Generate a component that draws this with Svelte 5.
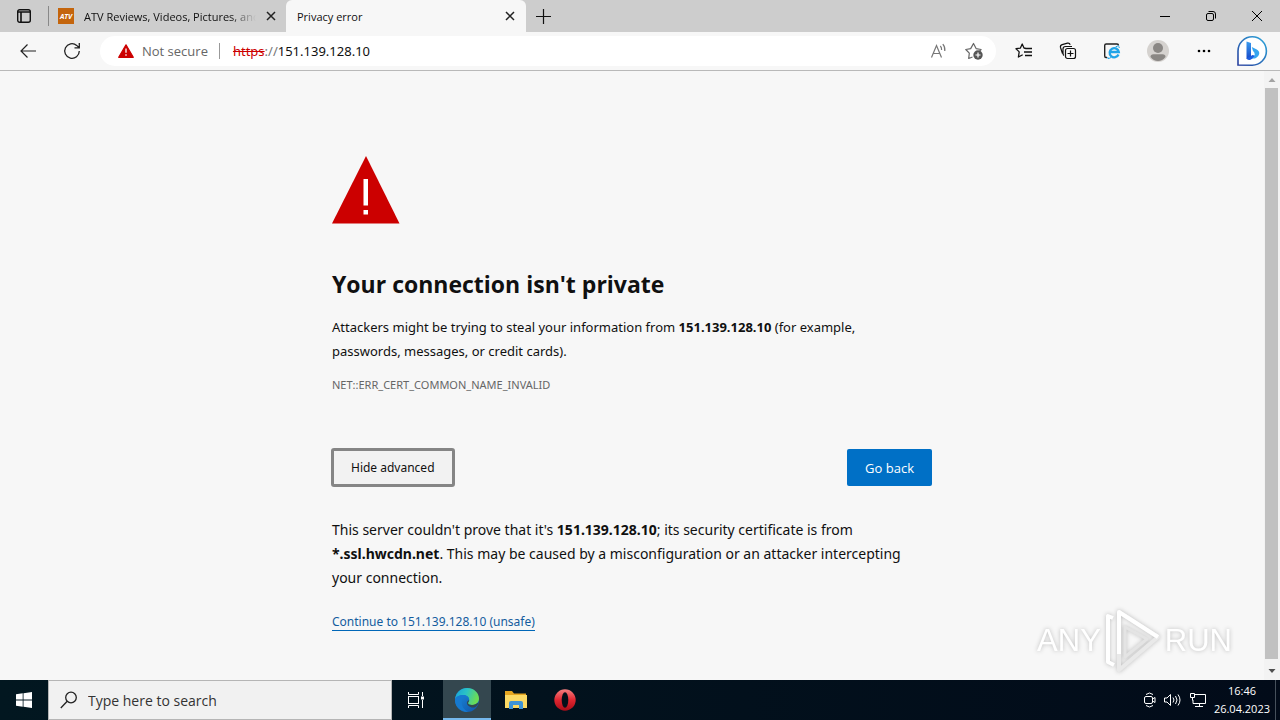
<script>
    let search = "";
    let advanced = true;
    const host = "151.139.128.10";
</script>

<div class="desktop">
    <header class="tabs">
        <button class="tab-menu" aria-label="Tab actions">
            <svg width="16" height="16" viewBox="0 0 16 16" fill="none" stroke="#111">
                <rect x="1.7" y="1.7" width="12.6" height="12.6" rx="2" stroke-width="1.4"/>
                <path d="M1.7 4h12.6M5 4v10" stroke-width="1.6"/>
            </svg>
        </button>
        <span class="divider"></span>
        <div class="tab">
            <svg width="16" height="16" viewBox="0 0 16 16">
                <rect width="16" height="16" fill="#c4650c"/>
                <text x="8" y="11" fill="#fff" font-size="7" font-weight="700" font-style="italic" text-anchor="middle">ATV</text>
            </svg>
            <span class="title faded">ATV Reviews, Videos, Pictures, and</span>
            <button class="close" aria-label="Close tab">
                <svg width="10" height="10" viewBox="0 0 10 10" stroke="#222" stroke-width="1.5"><path d="M1 1l8 8M9 1l-8 8"/></svg>
            </button>
        </div>
        <div class="tab active">
            <span class="title">Privacy error</span>
            <button class="close" aria-label="Close tab">
                <svg width="10" height="10" viewBox="0 0 10 10" stroke="#222" stroke-width="1.5"><path d="M1 1l8 8M9 1l-8 8"/></svg>
            </button>
        </div>
        <button class="new-tab" aria-label="New tab">
            <svg width="15" height="15" viewBox="0 0 15 15" stroke="#111" stroke-width="1.2"><path d="M7.5 0v15M0 7.5h15"/></svg>
        </button>
        <div class="window-buttons">
            <button aria-label="Minimize">
                <svg width="10" height="10" viewBox="0 0 10 10" stroke="#000"><path d="M0 5.5h10"/></svg>
            </button>
            <button aria-label="Restore">
                <svg width="10" height="10" viewBox="0 0 10 10" fill="none" stroke="#000">
                    <rect x=".5" y="2.5" width="7" height="7" rx="1.5"/>
                    <path d="M2.5 .5H7A2.5 2.5 0 0 1 9.500 3v4.500"/>
                </svg>
            </button>
            <button aria-label="Close">
                <svg width="10" height="10" viewBox="0 0 10 10" stroke="#000"><path d="M0 0l10 10M10 0L0 10"/></svg>
            </button>
        </div>
    </header>

    <nav class="toolbar">
        <button class="nav" aria-label="Back">
            <svg width="16" height="14" viewBox="0 0 16 14" fill="none" stroke="#222" stroke-width="1.2"><path d="M16 7H1M7.500 .5L1 7l6.500 6.500"/></svg>
        </button>
        <button class="nav" aria-label="Refresh">
            <svg width="18" height="18" viewBox="0 0 18 18" fill="none" stroke="#222" stroke-width="1.3"><path d="M16.300 9A7.300 7.300 0 1 1 13.700 3.400L16 5.600M16.300 1v4.800h-4.800"/></svg>
        </button>
        <div class="address">
            <svg width="16" height="14" viewBox="0 0 16 14">
                <path d="M8 .8L15.300 13.300H.7z" fill="#c00" stroke="#c00" stroke-width="1.200" stroke-linejoin="round"/>
                <path d="M8 4.500v4.300M8 10.200v1.500" stroke="#fff" stroke-width="1.300"/>
            </svg>
            <span class="security">Not secure</span>
            <span class="bar"></span>
            <span class="url" role="textbox" aria-label="Address" tabindex="0" contenteditable="true"><s>https</s><i>://</i>{host}</span>
            <button aria-label="Read aloud">
                <svg width="18" height="16" viewBox="0 0 18 16" fill="none" stroke="#777" stroke-width="1.200">
                    <path d="M2.500 14.500L7.500 2.500l5 12M4.300 10.500h6.400M11.300 3q1.500 1.500 1.300 4M13.800 1.200q2.500 2.800 2 6.800"/>
                </svg>
            </button>
            <button aria-label="Add to favorites">
                <svg width="18" height="18" viewBox="0 0 18 18">
                    <path d="M7.500 15L3.700 16.500 4.300 11.200.8 7.500l4.900-.9L8.500 1.500l2.600 5.100 5 .9-1.500 1.500" fill="none" stroke="#666" stroke-width="1.200" stroke-linejoin="round"/>
                    <circle cx="13" cy="13" r="4.700" fill="#555"/>
                    <path d="M13 10.500v5M10.500 13h5" stroke="#fff" stroke-width="1.200"/>
                </svg>
            </button>
        </div>
        <div class="actions">
            <button aria-label="Favorites">
                <svg width="18" height="16" viewBox="0 0 18 16" fill="none" stroke="#111" stroke-width="1.300" stroke-linejoin="round">
                    <path d="M11 5.500L9 5 7.200 1 5.300 5.200 1 5.700l3.200 3.200L3.400 14l4.300-2.300M10 5.500h7M9 9h8M10 12.500h7"/>
                </svg>
            </button>
            <button aria-label="Collections">
                <svg width="18" height="18" viewBox="0 0 18 18" fill="none" stroke="#111" stroke-width="1.200">
                    <path d="M3.500 11.500L1.500 5.500Q1 3.300 3.200 2.700L8.500 1.200q2-.4 2.700 1.600M5 13.500Q4 13 4 11V7q0-2.500 2.500-2.500H13"/>
                    <rect x="6.500" y="6.500" width="10" height="10" rx="2"/>
                    <path d="M11.500 8.500v6M8.500 11.500h6"/>
                </svg>
            </button>
            <button aria-label="Internet Explorer mode">
                <svg width="18" height="18" viewBox="0 0 18 18" fill="none">
                    <path d="M4 15.500H3Q1.700 15.500 1.700 14V3.500Q1.700 2 3.200 2H14q1.500 0 1.500 1.500" stroke="#222" stroke-width="1.400"/>
                    <path d="M15.500 12.500A4.600 4.600 0 1 1 15.800 10H7" stroke="#20a4e8" stroke-width="2.300"/>
                    <path d="M5 15Q3.500 18 8 15.500M12.500 5q4-2.500 3.700 1" stroke="#20a4e8"/>
                </svg>
            </button>
            <button class="profile" aria-label="Profile">
                <svg width="22" height="22" viewBox="0 0 22 22">
                    <circle cx="11" cy="11" r="11" fill="#d5d2cf"/>
                    <circle cx="11" cy="8" r="5" fill="#8a8784"/>
                    <path d="M3.500 17q0-2.800 3-2.800h9q3 0 3 2.800-3 4-7.500 4t-7.500-4z" fill="#8a8784"/>
                </svg>
            </button>
            <button aria-label="Settings and more">
                <svg width="14" height="4" viewBox="0 0 14 4"><circle cx="2" cy="2" r="1.300"/><circle cx="7" cy="2" r="1.300"/><circle cx="12" cy="2" r="1.300"/></svg>
            </button>
            <button class="bing" aria-label="Bing">
                <svg width="32" height="32" viewBox="0 0 32 32">
                    <defs>
                        <linearGradient id="ring" x1="0" y1="1" x2="1" y2="0"><stop offset="0" stop-color="#283e9d"/><stop offset="1" stop-color="#2da8dc"/></linearGradient>
                        <linearGradient id="bee" x1="0" y1="0" x2="0" y2="1"><stop offset="0" stop-color="#3a9cef"/><stop offset="1" stop-color="#1648c8"/></linearGradient>
                    </defs>
                    <path d="M2 30V16a14.200 14.200 0 1 1 14.200 14.200z" fill="#fff" stroke="url(#ring)" stroke-width="1.600"/>
                    <path d="M10.500 6.500l4.500 1.500v14l-4.500 2z" fill="url(#bee)"/>
                    <path d="M10.500 23.500l6-3.500 4 1-6 3.700q-2.200 1-4-1.200z" fill="#1b5de0"/>
                    <path d="M15.800 12l5 2.400q2.900 1.600 2.400 4.700-.5 2.600-3.200 3.800-2.500 1.200-4 .300 3-1.500 2.700-4.200-.2-1.800-1.700-3z" fill="#36a5ef"/>
                </svg>
            </button>
        </div>
    </nav>

    <div class="viewport">
        <main>
            <svg class="warning" width="68" height="68" viewBox="0 0 68 68">
                <path d="M34 0l33.500 67.500H0z" fill="#c00"/>
                <path d="M31.500 23h4.500v26.500h-4.500zM31.500 54h4.500v4.500h-4.500z" fill="#fff"/>
            </svg>
            <h1>Your connection isn't private</h1>
            <p class="lead">Attackers might be trying to steal your information from <b>{host}</b> (for example, passwords, messages, or credit cards).</p>
            <p class="code">NET::ERR_CERT_COMMON_NAME_INVALID</p>
            <div class="buttons">
                <button class="details" on:click={() => advanced = !advanced}>{advanced ? "Hide advanced" : "Advanced"}</button>
                <button class="primary">Go back</button>
            </div>
            {#if advanced}
                <p class="more">This server couldn't prove that it's <b>{host}</b>; its security certificate is from <b>*.ssl.hwcdn.net</b>. This may be caused by a misconfiguration or an attacker intercepting your connection.</p>
                <a href="#unsafe">Continue to {host} (unsafe)</a>
            {/if}
        </main>
        <div class="scrollbar">
            <svg width="16" height="17" viewBox="0 0 16 17"><path d="M4.500 11L8 7l3.500 4z" fill="#a3a3a3"/></svg>
            <div class="thumb"></div>
            <svg width="16" height="21" viewBox="0 0 16 21"><path d="M4.500 10L8 14l3.500-4z" fill="#505050"/></svg>
        </div>
        <div class="watermark">
            <span>ANY</span>
            <svg width="58" height="64" viewBox="0 0 58 64" fill="none" stroke-width="4" stroke-linejoin="round">
                <path d="M9 9L4 7v46l6 3" stroke="#fff"/>
                <path d="M15 3l39 25-39 33z" stroke="#e9e9e9"/>
                <path d="M15 45V3l39 25" stroke="#fff"/>
                <path d="M21 18v30l22-18z" stroke="#e4e4e4" stroke-width="3"/>
            </svg>
            <span>RUN</span>
        </div>
    </div>

    <footer>
        <button class="start" aria-label="Start">
            <svg width="16" height="16" viewBox="0 0 16 16" fill="#fff"><path d="M0 2.300L6.700 1.300v6.200H0zM7.500 1.200L16 0v7.500H7.500zM0 8.400h6.700v6.300L0 13.700zM7.500 8.400H16V16l-8.500-1.200z"/></svg>
        </button>
        <label class="search">
            <svg width="18" height="18" viewBox="0 0 18 18" fill="none" stroke="#222" stroke-width="1.300"><circle cx="11" cy="6.500" r="5.300"/><path d="M7.200 10.300L.8 17"/></svg>
            <input type="text" bind:value={search} placeholder="Type here to search" aria-label="Type here to search"/>
        </label>
        <button class="app task-view" aria-label="Task View">
            <svg width="18" height="16" viewBox="0 0 18 16" fill="none" stroke="#fff">
                <path d="M1.500 0v2.500h10V0M1.500 16v-2.500h10V16"/><rect x="1.500" y="4.500" width="10" height="7"/>
                <path d="M15.500 0v4M15.500 8v8"/><path d="M14 4.500h3v3h-3z" fill="#fff" stroke="none"/>
            </svg>
        </button>
        <button class="app current" aria-label="Microsoft Edge">
            <svg width="24" height="24" viewBox="0 0 24 24">
                <defs>
                    <linearGradient id="top" x1="0" y1="0" x2="1" y2=".3"><stop offset="0" stop-color="#169fda"/><stop offset=".5" stop-color="#2bc3c5"/><stop offset="1" stop-color="#6bdc55"/></linearGradient>
                    <linearGradient id="low" x1="0" y1="0" x2="1" y2="1"><stop offset="0" stop-color="#1b8fdf"/><stop offset="1" stop-color="#1153a8"/></linearGradient>
                </defs>
                <circle cx="12" cy="12" r="12" fill="url(#low)"/>
                <path d="M.1 11C1 4.500 6 0 12 0c7 0 12 5 12 10.500 0 4-3 6.500-7 6.500-2.500 0-4-1-4-2 0-.8 1.200-1.300 1.200-3.200C14.200 8.500 11 7 8 7 4 7 1 9 .1 11z" fill="url(#top)"/>
                <path d="M14.200 12c0 1.700-1.200 2.200-1.200 3 0 1 1.500 2 4 2 2.200 0 4-.7 5.500-2 .8 0 .7.700.2 1.500C20.500 20 17.500 20 15.500 19c-4-1.500-5-5.500-1.300-7z" fill="#34474f"/>
                <path d="M8 10c-3 4-1 11 5 14C4 24-.5 17 .1 11 1.500 8 5 7 8 7c3.500 0 6 2 6.200 4.500C12.500 9 9.500 8.500 8 10z" fill="#1679cf"/>
            </svg>
        </button>
        <button class="app" aria-label="File Explorer">
            <svg width="22" height="20" viewBox="0 0 22 20">
                <path d="M0 1h7l2 2.500h12V18H0z" fill="#e5a520"/>
                <path d="M0 5h22v13H0z" fill="#fbd964"/>
                <path d="M4 19v-6q0-2 2-2h10q2 0 2 2v6h-4v-4H8v4z" fill="#3d93d6"/>
            </svg>
        </button>
        <button class="app" aria-label="Opera">
            <svg width="22" height="22" viewBox="0 0 22 22">
                <defs><linearGradient id="red" x1="0" y1="0" x2="0" y2="1"><stop offset="0" stop-color="#f58080"/><stop offset=".5" stop-color="#e02630"/><stop offset="1" stop-color="#a80d18"/></linearGradient></defs>
                <circle cx="11" cy="11" r="10.700" fill="url(#red)"/><ellipse cx="11" cy="11" rx="3.300" ry="7.800" fill="#041019"/>
            </svg>
        </button>
        <div class="tray">
            <svg width="14" height="16" viewBox="0 0 14 16" fill="none" stroke="#fff">
                <rect x="1.500" y="4.500" width="8" height="7" rx="1.500"/><path d="M9.500 7l2.500-1.500v5L9.500 9M3 2.500Q6.500-.5 10 2.500M3 13.500q3.500 3 7 0"/>
            </svg>
            <svg width="18" height="14" viewBox="0 0 18 14" fill="none" stroke="#fff"><path d="M.5 5v4H3l3.500 3.500v-11L3 5zM9 4.500q2 2.500 0 5M11.500 3q3 4 0 8M14 1.500q4 5.500 0 11"/></svg>
            <svg width="18" height="16" viewBox="0 0 18 16" fill="none" stroke="#fff"><path d="M6 2.500h10.500v9H4V8M10.500 11.500v3M6 14.500h8M1.500 1.500h4v4h-4zM3.500 5.500v3"/></svg>
            <time><span>16:46</span><span>26.04.2023</span></time>
        </div>
        <span class="peek"></span>
    </footer>
</div>

<style>
    :global(body) {
        margin: 0;
    }

    .desktop {
        display: flex;
        flex-direction: column;
        min-height: 100vh;
        background: #f7f7f7;
        color: #101010;
        font-family: "Open Sans", "Noto Sans", sans-serif;
        font-size: 12px;
    }

    button, input {
        font: inherit;
        color: inherit;
    }

    button {
        display: flex;
        align-items: center;
        justify-content: center;
        padding: 0;
        border: 0;
        background: none;
    }

    svg {
        flex: none;
        display: block;
    }

    .tabs {
        display: flex;
        align-items: center;
        height: 32px;
        background: #cdcdcd;
    }

    .tab-menu {
        width: 48px;
    }

    .divider {
        width: 1px;
        height: 20px;
        margin-right: 9px;
        background: #888;
    }

    .tab {
        display: flex;
        align-items: center;
        gap: 10px;
        width: 228px;
        height: 32px;
        font-size: 11px;
    }

    .tab.active {
        box-sizing: border-box;
        width: 240px;
        padding: 0 11px;
        border-radius: 6px 6px 0 0;
        background: #f7f7f7;
    }

    .title {
        flex: 1;
        overflow: hidden;
        white-space: nowrap;
    }

    .faded {
        mask-image: linear-gradient(to right, #000 85%, transparent);
    }

    .tab:not(.active) .close {
        margin-right: 10px;
    }

    .new-tab {
        width: 34px;
        height: 32px;
    }

    .window-buttons {
        display: flex;
        margin-left: auto;
    }

    .window-buttons button {
        width: 46px;
        height: 32px;
    }

    .toolbar {
        display: flex;
        align-items: center;
        height: 38px;
        padding-left: 6px;
        border-bottom: 1px solid #b9b9b9;
    }

    .nav {
        width: 44px;
        height: 32px;
    }

    .address {
        display: flex;
        flex: 1;
        align-items: center;
        height: 30px;
        margin-left: 6px;
        padding: 0 4px 0 18px;
        border-radius: 15px;
        background: #fff;
        font-size: 13px;
    }

    .security {
        margin-left: 8px;
        color: #666;
    }

    .bar {
        width: 1px;
        height: 16px;
        margin: 0 13px 0 11px;
        background: #999;
    }

    .url {
        flex: 1;
        outline: none;
        font-family: "Noto Sans", sans-serif;
    }

    .url s {
        color: #c00;
    }

    .url i {
        color: #777;
        font-style: normal;
    }

    .address button {
        width: 36px;
    }

    .actions {
        display: flex;
        padding-left: 6px;
    }

    .actions button {
        width: 44px;
        height: 32px;
    }

    .actions .profile {
        width: 48px;
    }

    .actions .bing {
        width: 54px;
        padding-right: 2px;
    }

    .viewport {
        position: relative;
        display: flex;
        flex: 1;
    }

    main {
        box-sizing: border-box;
        width: 100%;
        max-width: 600px;
        margin: 0 auto;
        padding: 85px 0 48px;
        font-family: "Noto Sans", sans-serif;
    }

    h1 {
        margin: 43px 0 14px;
        font-family: "Open Sans", sans-serif;
        font-size: 23px;
        font-weight: 700;
        line-height: 34px;
    }

    p {
        margin: 0;
        line-height: 24px;
    }

    .lead {
        padding-right: 24px;
        font-size: 13px;
    }

    .code {
        margin-top: 10px;
        color: #666;
        font-size: 11px;
    }

    .buttons {
        display: flex;
        justify-content: space-between;
        margin: 52px 0 32px;
    }

    .buttons button {
        box-sizing: border-box;
        height: 37px;
        padding: 0 18px;
        border-radius: 2px;
        font-size: 13px;
    }

    .buttons .details {
        outline: 3px solid #858585;
        outline-offset: -2px;
        background: #f2f2f2;
        font-size: 12px;
        padding: 0 19px;
    }

    .buttons .primary {
        background: #0070c6;
        color: #fff;
        font-family: "Open Sans", sans-serif;
    }

    .more {
        font-size: 14px;
    }

    a {
        display: inline-block;
        margin-top: 24px;
        border-bottom: 1px solid #0067b8;
        color: #145c9e;
        font-size: 12px;
        line-height: 16px;
        text-decoration: none;
    }

    .scrollbar {
        display: flex;
        flex-direction: column;
        width: 16px;
        background: #f3f3f3;
    }

    .thumb {
        flex: 1;
        margin: 0 2px 0 1px;
        background: #c1c1c1;
    }

    .watermark {
        position: absolute;
        right: 48px;
        bottom: 7px;
        display: flex;
        align-items: center;
        gap: 3px;
        color: #fff;
        filter: drop-shadow(0 0 2px #bbb);
        font-family: "Liberation Sans", sans-serif;
        font-size: 31px;
        pointer-events: none;
    }

    footer {
        display: flex;
        height: 40px;
        background: linear-gradient(to right, #021720, #020b19);
        color: #fff;
    }

    .start {
        width: 48px;
    }

    .search {
        box-sizing: border-box;
        display: flex;
        align-items: center;
        gap: 10px;
        width: 344px;
        padding: 0 11px;
        border: 1px solid #b5b5b5;
        background: #f1f1f1;
    }

    .search input {
        flex: 1;
        min-width: 0;
        padding: 0;
        border: 0;
        outline: none;
        background: none;
        color: #222;
        font-size: 14px;
    }

    .search input::placeholder {
        color: #333;
        opacity: 1;
    }

    .app {
        width: 49px;
    }

    .task-view {
        width: 51px;
        padding-right: 3px;
    }

    .current {
        box-sizing: border-box;
        width: 48px;
        padding-top: 2px;
        border-bottom: 2px solid #76b9ed;
        background: #34474f;
    }

    .tray {
        display: flex;
        align-items: center;
        gap: 7px;
        margin-left: auto;
        padding-right: 5px;
    }

    .peek {
        width: 4px;
        border-left: 1px solid #46505b;
    }

    time {
        display: flex;
        flex-direction: column;
        align-items: center;
        font-size: 11px;
        line-height: 18px;
    }
</style>
